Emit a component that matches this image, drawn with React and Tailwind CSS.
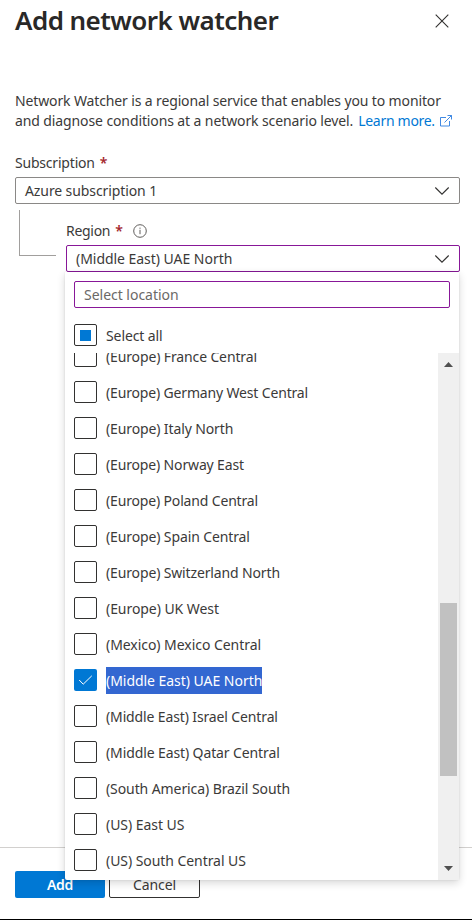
import React from "react";

const REGIONS = [
  ["(Europe) France Central", "tracking-[-0.13px]"],
  ["(Europe) Germany West Central", "tracking-[-0.16px]"],
  ["(Europe) Italy North", "tracking-[-0.12px]"],
  ["(Europe) Norway East", "tracking-[-0.15px]"],
  ["(Europe) Poland Central", "tracking-[-0.16px]"],
  ["(Europe) Spain Central", "tracking-[-0.12px]"],
  ["(Europe) Switzerland North", "tracking-[-0.14px]"],
  ["(Europe) UK West", "tracking-[-0.06px]"],
  ["(Mexico) Mexico Central", "tracking-[-0.05px]"],
  ["(Middle East) UAE North", "tracking-[-0.04px]"],
  ["(Middle East) Israel Central", "tracking-[-0.13px]"],
  ["(Middle East) Qatar Central", "tracking-[-0.11px]"],
  ["(South America) Brazil South", "tracking-[-0.09px]"],
  ["(US) East US", "tracking-[-0.05px]"],
  ["(US) South Central US", "tracking-[-0.06px]"],
];

const SELECTED = "(Middle East) UAE North";

function Chevron() {
  return (
    <svg width="16" height="10" viewBox="0 0 16 10" className="mr-[9px] shrink-0" fill="none" stroke="#323130" strokeWidth="1.1">
      <path d="M1.3 1.5 8 8.2l6.7-6.7" />
    </svg>
  );
}

function Select({ value, className }) {
  return (
    <div className={`flex h-[27px] items-center justify-between rounded-[2px] border bg-white pl-[9px] ${className}`}>
      <span className="whitespace-nowrap">{value}</span>
      <Chevron />
    </div>
  );
}

function Checkbox({ state }) {
  if (state === "checked") {
    return (
      <span className="flex h-[22px] w-[23px] shrink-0 items-center justify-center rounded-[2px] bg-[#0078d4]">
        <svg width="15" height="12" viewBox="0 0 15 12" fill="none" stroke="#fff" strokeWidth="1">
          <path d="M1.2 6l4 4.2L13.8 1.8" />
        </svg>
      </span>
    );
  }
  return (
    <span className="flex h-[22px] w-[23px] shrink-0 items-center justify-center rounded-[2px] border border-[#323130] bg-white">
      {state === "mixed" && <span className="size-[11px] bg-[#0078d4]" />}
    </span>
  );
}

function Option({ label, tracking }) {
  const selected = label === SELECTED;
  return (
    <div className="flex h-[36px] items-center gap-[9px] pl-[9px]">
      <Checkbox state={selected ? "checked" : "empty"} />
      <span className={`whitespace-nowrap leading-[27px] ${tracking} ${selected ? "bg-[#3367d1] text-white" : ""}`}>{label}</span>
    </div>
  );
}

function ScrollBar() {
  return (
    <div className="flex w-[21px] shrink-0 flex-col items-center bg-[#f0f0f0]">
      <svg width="9" height="5" viewBox="0 0 9 5" className="mt-[9px]" fill="#505050">
        <path d="M0 5 4.5 0 9 5z" />
      </svg>
      <div className="mt-[236px] h-[173px] w-[17px] bg-[#c1c1c1]" />
      <svg width="9" height="5" viewBox="0 0 9 5" className="mt-auto mb-[9px]" fill="#505050">
        <path d="M0 0 4.5 5 9 0z" />
      </svg>
    </div>
  );
}

function RegionMenu() {
  return (
    <div className="absolute top-full left-[-1px] flex h-[608px] w-[394px] flex-col rounded-b-[2px] bg-white shadow-[0_3px_8px_rgba(0,0,0,0.16),0_0_2px_rgba(0,0,0,0.12)]">
      <div className="mx-[9px] mt-[9px] flex h-[27px] w-[376px] shrink-0 items-center rounded-[2px] border border-[#881798] pl-[9px] tracking-[-0.02px] text-[#6b6967]">
        Select location
      </div>
      <div className="mt-[16px] flex h-[22px] shrink-0 items-center gap-[9px] pl-[9px]">
        <Checkbox state="mixed" />
        <span className="pt-[2px] tracking-[-0.1px]">Select all</span>
      </div>
      <div className="mt-[7px] flex h-[527px] overflow-hidden">
        <div className="h-full flex-1 overflow-hidden">
          <div className="mt-[-15px]">
            {REGIONS.map(([label, tracking]) => (
              <Option key={label} label={label} tracking={tracking} />
            ))}
          </div>
        </div>
        <ScrollBar />
      </div>
    </div>
  );
}

export default function App() {
  return (
    <div className="flex h-[920px] w-[472px] flex-col overflow-hidden border-b border-black bg-white font-['Noto_Sans','Open_Sans',sans-serif] text-[14px] leading-[20px] tracking-[-0.3px] text-[#3b3a39]">
      <header className="flex h-[42px] items-center justify-between pr-[23px] pl-[15px]">
        <h1 className="text-[26px] leading-[40px] font-semibold tracking-[-0.55px] whitespace-nowrap text-[#292827] pb-[2px]">Add network watcher</h1>
        <svg width="14" height="14" viewBox="0 0 14 14" fill="none" stroke="#323130" strokeWidth="1.1">
          <path d="M.7.7l12.6 12.6M13.3.7.7 13.3" />
        </svg>
      </header>

      <main className="flex-1 pr-[12px] pl-[15px]">
        <p className="mt-[49px] whitespace-nowrap">
          <span className="block w-max tracking-[-0.13px]">Network Watcher is a regional service that enables you to monitor</span>
          <span className="flex w-max items-center">
            <span className="tracking-[-0.11px]">and diagnose conditions at a network scenario level.</span>
            <a className="ml-[5px] text-[#0078d4]">Learn more.</a>
            <svg width="12" height="12" viewBox="0 0 12 12" className="ml-[5px] -mt-[1px]" fill="none" stroke="#2b7de0" strokeWidth="0.9">
              <path d="M6 2.5H.5v8.500h9V6M4.500 7.500l7-7M7.500.5h4v4" />
            </svg>
          </span>
        </p>

        <div className="mt-[22px] flex h-[20px] items-center">
          <span className="tracking-[-0.2px]">Subscription</span>
          <span className="ml-[5px] font-semibold text-[#a4262c]">*</span>
        </div>
        <Select value="Azure subscription 1" className="mt-[4px] border-[#8a8886] tracking-[-0.1px]" />

        <div className="flex">
          <div className="mt-[6px] ml-[4px] h-[46px] w-[37px] shrink-0 border-b border-l border-[#a19f9d]" />
          <div className="mt-[17px] ml-[10px] flex-1">
            <div className="flex h-[20px] items-center">
              <span>Region</span>
              <span className="ml-[5px] font-semibold text-[#a4262c]">*</span>
              <svg width="14" height="14" viewBox="0 0 14 14" className="ml-[10px]" fill="none" stroke="#605e5c" strokeWidth="1">
                <circle cx="7" cy="7" r="6.3" />
                <path d="M7 5.8v4.4M7 3.6v1.2" />
              </svg>
            </div>
            <div className="relative mt-[4px]">
              <Select value={SELECTED} className="border-[#881798] tracking-[-0.04px]" />
              <RegionMenu />
            </div>
          </div>
        </div>
      </main>

      <footer className="flex h-[72px] shrink-0 items-start gap-[4px] border-t border-[#d2d0ce] pt-[23px] pl-[15px]">
        <button className="h-[27px] w-[90px] rounded-[2px] bg-[#0078d4] leading-[25px] font-semibold text-white">Add</button>
        <button className="h-[27px] w-[91px] rounded-[2px] border border-[#323130] bg-white leading-[24px] tracking-[-0.1px]">Cancel</button>
      </footer>
    </div>
  );
}
